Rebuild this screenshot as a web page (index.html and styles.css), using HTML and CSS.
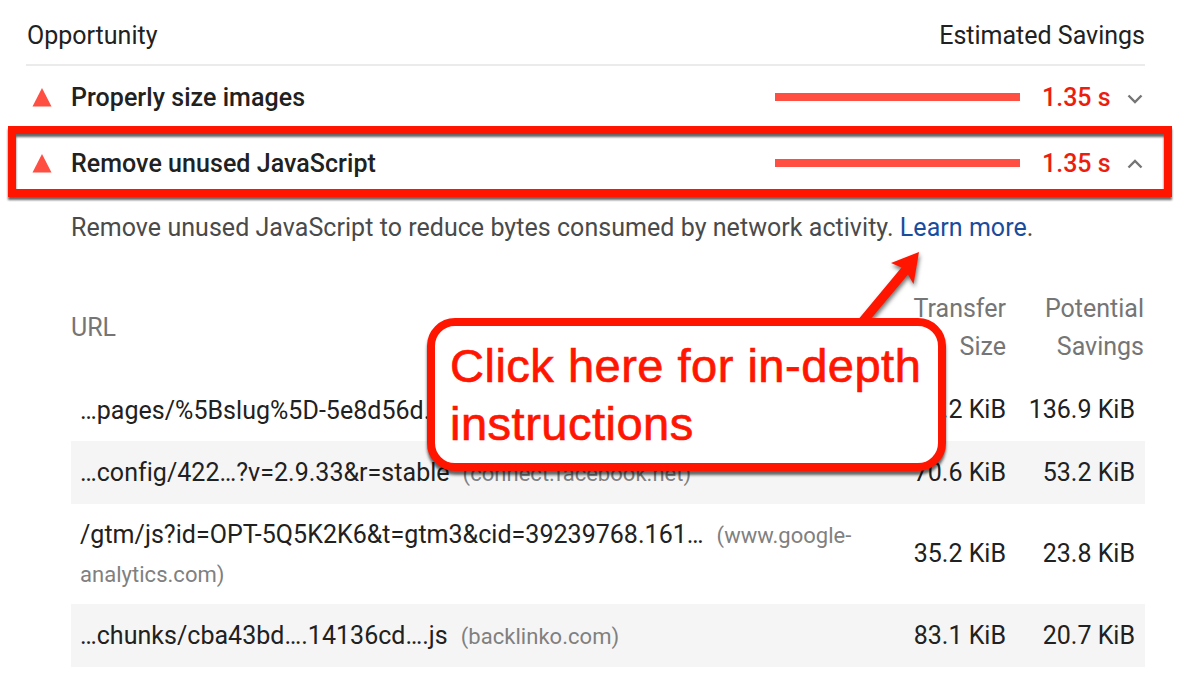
FILE: index.html
```html
<!DOCTYPE html>
<html lang="en">
<head>
<meta charset="utf-8">
<title>Opportunities</title>
<link rel="stylesheet" href="styles.css">
</head>
<body>
<main class="report">
  <header class="head"><span class="head-label">Opportunity</span><span class="head-savings">Estimated Savings</span></header>
  <section class="audit">
    <svg class="fail" viewBox="0 0 20 19"><path d="M10 0L19.500 18.500H.5z"/></svg>
    <span class="title">Properly size images</span>
    <span class="bar"></span>
    <span class="time">1.35 s</span>
    <svg class="chevron" viewBox="0 0 16 10"><path d="M1.500 1.500L8 8L14.500 1.500"/></svg>
  </section>
  <section class="audit">
    <svg class="fail" viewBox="0 0 20 19"><path d="M10 0L19.500 18.500H.5z"/></svg>
    <span class="title">Remove unused JavaScript</span>
    <span class="bar"></span>
    <span class="time">1.35 s</span>
    <svg class="chevron chevron-up" viewBox="0 0 16 10"><path d="M1.500 8.500L8 2L14.500 8.500"/></svg>
  </section>
  <p class="description">Remove unused JavaScript to reduce bytes consumed by network activity. <a class="link">Learn more</a>.</p>
  <div class="table">
    <div class="row labels"><span>URL</span><span class="num">Transfer<br>Size</span><span class="num">Potential<br>Savings</span></div>
    <div class="row"><span class="url">…pages/%5Bslug%5D-5e8d56d…</span><span class="num">148.2 KiB</span><span class="num last">136.9 KiB</span></div>
    <div class="row shaded"><span class="url">…config/422…?v=2.9.33&amp;r=stable<small class="host">(connect.facebook.net)</small></span><span class="num">70.6 KiB</span><span class="num last">53.2 KiB</span></div>
    <div class="row tall"><span class="url">/gtm/js?id=OPT-5Q5K2K6&amp;t=gtm3&amp;cid=39239768.161…<small class="host">(www.google-<br>analytics.com)</small></span><span class="num">35.2 KiB</span><span class="num last">23.8 KiB</span></div>
    <div class="row shaded"><span class="url">…chunks/cba43bd….14136cd….js<small class="host">(backlinko.com)</small></span><span class="num">83.1 KiB</span><span class="num last">20.7 KiB</span></div>
  </div>
</main>
<div class="highlight"></div>
<svg class="arrow" viewBox="0 0 80 84"><path d="M69 7L41 18L51.500 22.500L7 76H19L58 29.500L63.500 39z"/></svg>
<div class="callout">Click here for in-depth<br>instructions</div>
</body>
</html>
```
FILE: styles.css
```css
* { box-sizing: border-box; }
body {
  margin: 0;
  width: 1200px;
  height: 686px;
  overflow: hidden;
  position: relative;
  background: #fff;
  color: #212121;
  font: 25px/38px Roboto, sans-serif;
}
.report { padding: 8px 55px 0 26px; }
.head {
  display: flex;
  justify-content: space-between;
  height: 58px;
  padding: 9px 0 0 1px;
  border-bottom: 2px solid #ebebeb;
}
.audit {
  display: flex;
  align-items: center;
  height: 66px;
  padding: 0 2px 4px 6px;
}
.fail { width: 20px; height: 19px; margin: 1px 19px 0 0; fill: #ff4e42; }
.title { flex: 1; padding-top: 2px; font-weight: 500; letter-spacing: .05px; }
.bar { width: 245px; height: 8px; margin: 0 22px 0 0; background: #ff4e42; }
.time { width: 70px; padding-top: 2px; color: #eb1e10; font-weight: 500; }
.chevron {
  width: 16px;
  height: 10px;
  margin: 4px 0 0 15px;
  fill: none;
  stroke: #757575;
  stroke-width: 2.400;
}
.chevron-up { margin-top: 1px; }
.description {
  margin: 11px 0 0 45px;
  color: #4a4a4a;
  letter-spacing: .045px;
  white-space: nowrap;
}
.link { color: #1a4c9c; }
.table { margin: 43px 0 0 45px; }
.row {
  display: grid;
  grid-template-columns: 799px 136px 139px;
  align-items: center;
  height: 62.500px;
  padding-top: 1px;
}
.labels { height: 88.500px; color: #757575; padding: 0 1px 12px 0; grid-template-columns: 799px 136px 138px; }
.tall { height: 100.500px; }
.shaded { background: #f5f5f5; }
.url { padding: 1px 0 0 9px; white-space: nowrap; letter-spacing: .03px; }
.host { font-size: 22px; color: #808080; margin-left: 13px; }
.num { text-align: right; }
.last { padding-right: 10px; }
.highlight {
  position: absolute;
  left: 8px;
  top: 126px;
  width: 1164px;
  height: 71px;
  border: 8px solid #ff1500;
  filter: drop-shadow(0 3px 1px rgba(0, 0, 0, .6));
}
.arrow {
  position: absolute;
  left: 850px;
  top: 245px;
  width: 80px;
  height: 84px;
  fill: #ff1500;
  filter: drop-shadow(1px 3px 2px rgba(0, 0, 0, .55));
}
.callout {
  position: absolute;
  left: 427px;
  top: 318px;
  width: 519px;
  height: 153px;
  padding: 11px 0 0 15px;
  border: 8px solid #ff1500;
  border-radius: 28px;
  background: #fff;
  color: #ff1500;
  font: 47px/58px "Liberation Sans", Arial, sans-serif;
  letter-spacing: .5px;
  -webkit-text-stroke: .7px #ff1500;
  white-space: nowrap;
  box-shadow: 0 4px 3px rgba(0, 0, 0, .6);
}
```
